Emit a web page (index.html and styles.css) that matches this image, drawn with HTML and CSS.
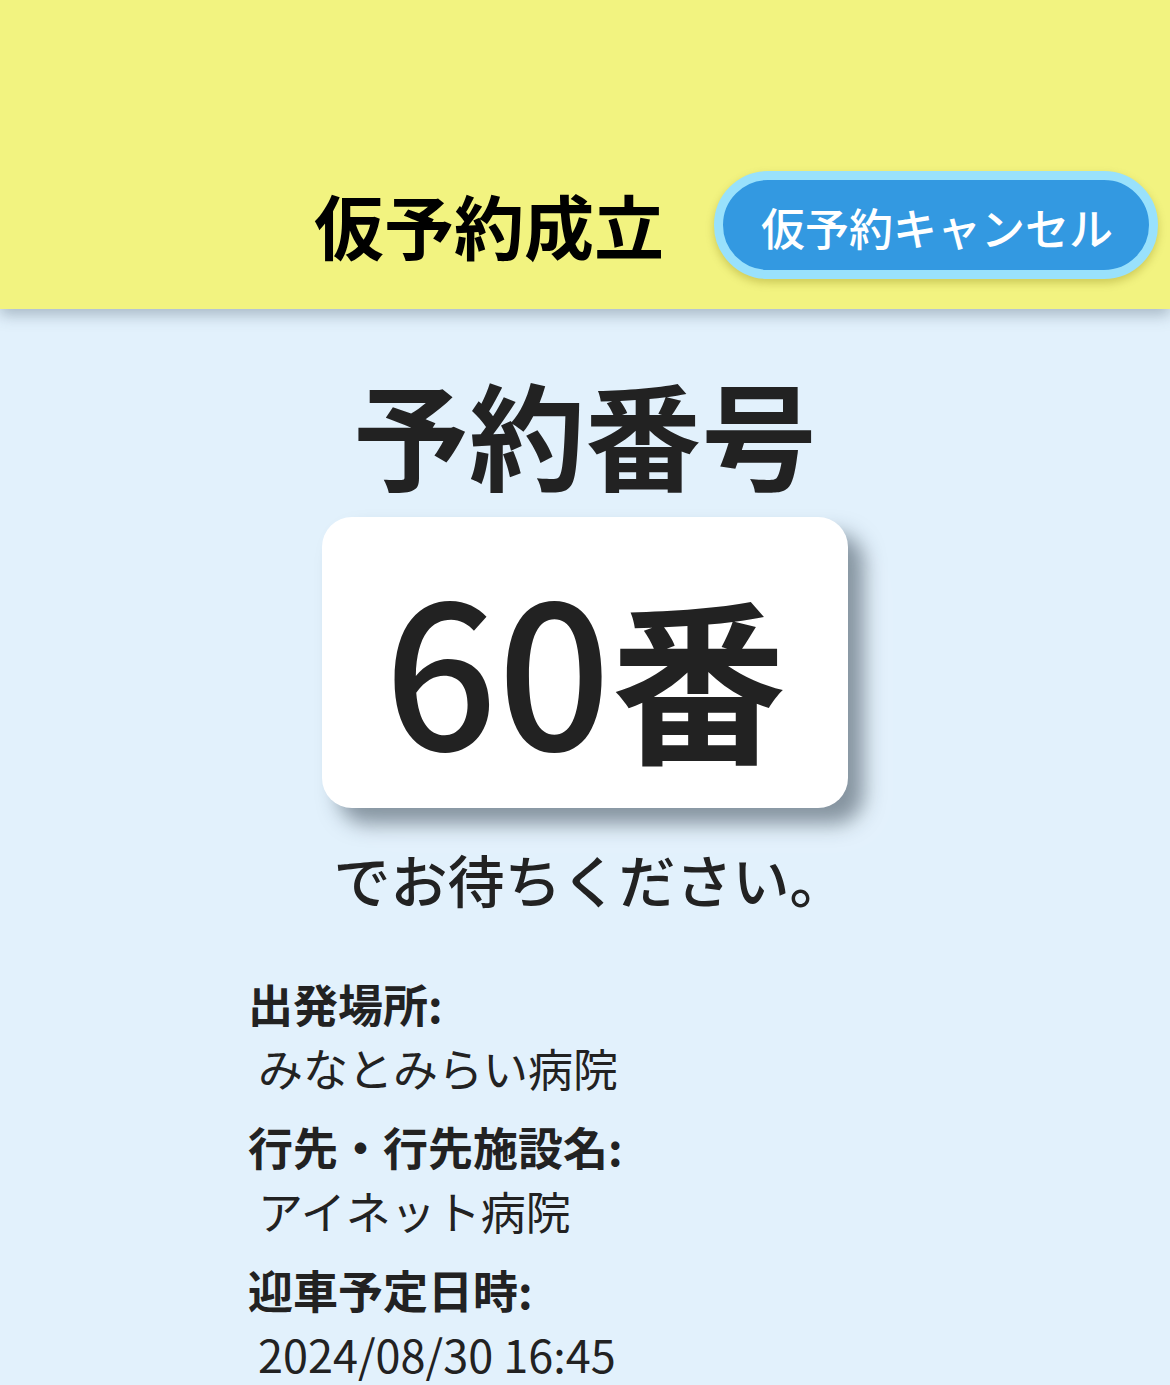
FILE: index.html
```html
<!DOCTYPE html>
<html lang="ja">
<head>
<meta charset="utf-8">
<title>仮予約成立</title>
<link rel="stylesheet" href="styles.css">
</head>
<body>
<header class="topbar">
  <h1 class="status-title">仮予約成立</h1>
  <button class="cancel-btn" type="button">仮予約キャンセル</button>
</header>
<main class="content">
  <h2 class="number-heading">予約番号</h2>
  <div class="number-card"><span class="number-digits">60</span><span class="number-unit">番</span></div>
  <p class="wait-text">でお待ちください。</p>
  <dl class="info">
    <div class="info-item">
      <dt class="info-label">出発場所:</dt>
      <dd class="info-value">&nbsp;みなとみらい病院</dd>
    </div>
    <div class="info-item">
      <dt class="info-label">行先・行先施設名:</dt>
      <dd class="info-value">&nbsp;アイネット病院</dd>
    </div>
    <div class="info-item">
      <dt class="info-label">迎車予定日時:</dt>
      <dd class="info-value">&nbsp;2024/08/30 16:45</dd>
    </div>
  </dl>
</main>
</body>
</html>
```

FILE: styles.css
```css
html, body {
  margin: 0;
  padding: 0;
}

body {
  background: #e2f1fc;
  font-family: "Noto Sans CJK JP", "Noto Sans", sans-serif;
  color: #222222;
  overflow: hidden;
}

.topbar {
  position: relative;
  z-index: 1;
  display: flex;
  justify-content: flex-end;
  align-items: center;
  height: 309px;
  box-sizing: border-box;
  padding: 171px 12px 30px 0;
  background: #f2f380;
  box-shadow: 0 6px 14px rgba(60, 80, 100, 0.35);
}

.status-title {
  margin: 0 50px 0 0;
  font-size: 70px;
  line-height: 1.2;
  font-weight: 700;
  color: #000000;
}

.cancel-btn {
  width: 444px;
  height: 108px;
  box-sizing: border-box;
  border: 9px solid #99e1fc;
  border-radius: 54px;
  background: #3399e1;
  color: #ffffff;
  font-family: "Noto Sans CJK JP", "Noto Sans", sans-serif;
  font-size: 44px;
  font-weight: 500;
  line-height: 1;
  padding: 3px 0 0 2px;
  white-space: nowrap;
  box-shadow: 0 4px 8px rgba(120, 110, 0, 0.3);
  cursor: pointer;
}

.content {
  display: flex;
  flex-direction: column;
  align-items: center;
}

.number-heading {
  margin: 54px 0 0 0;
  font-size: 116px;
  line-height: 137px;
  font-weight: 700;
  color: #222222;
}

.number-card {
  margin-top: 17px;
  width: 526px;
  height: 291px;
  background: #ffffff;
  border-radius: 30px;
  box-shadow: 16px 16px 20px rgba(40, 55, 70, 0.5), 34px 34px 40px rgba(255, 255, 255, 0.12);
  text-align: center;
  font-size: 199px;
  line-height: 293px;
  font-weight: 500;
  color: #222222;
  white-space: nowrap;
}

.number-unit {
  font-size: 175px;
  font-weight: 700;
}

.wait-text {
  margin: 37px 0 0 10px;
  font-size: 57px;
  line-height: 66px;
  font-weight: 500;
  color: #222222;
}

.info {
  align-self: stretch;
  margin: 61px 0 0 0;
  padding-left: 248px;
}

.info-item {
  margin-bottom: 15px;
}

.info-label {
  margin: 0;
  font-size: 45px;
  line-height: 64px;
  font-weight: 700;
  color: #222222;
}

.info-value {
  margin: 0;
  font-size: 45px;
  line-height: 64px;
  font-weight: 400;
  color: #222222;
}
```
